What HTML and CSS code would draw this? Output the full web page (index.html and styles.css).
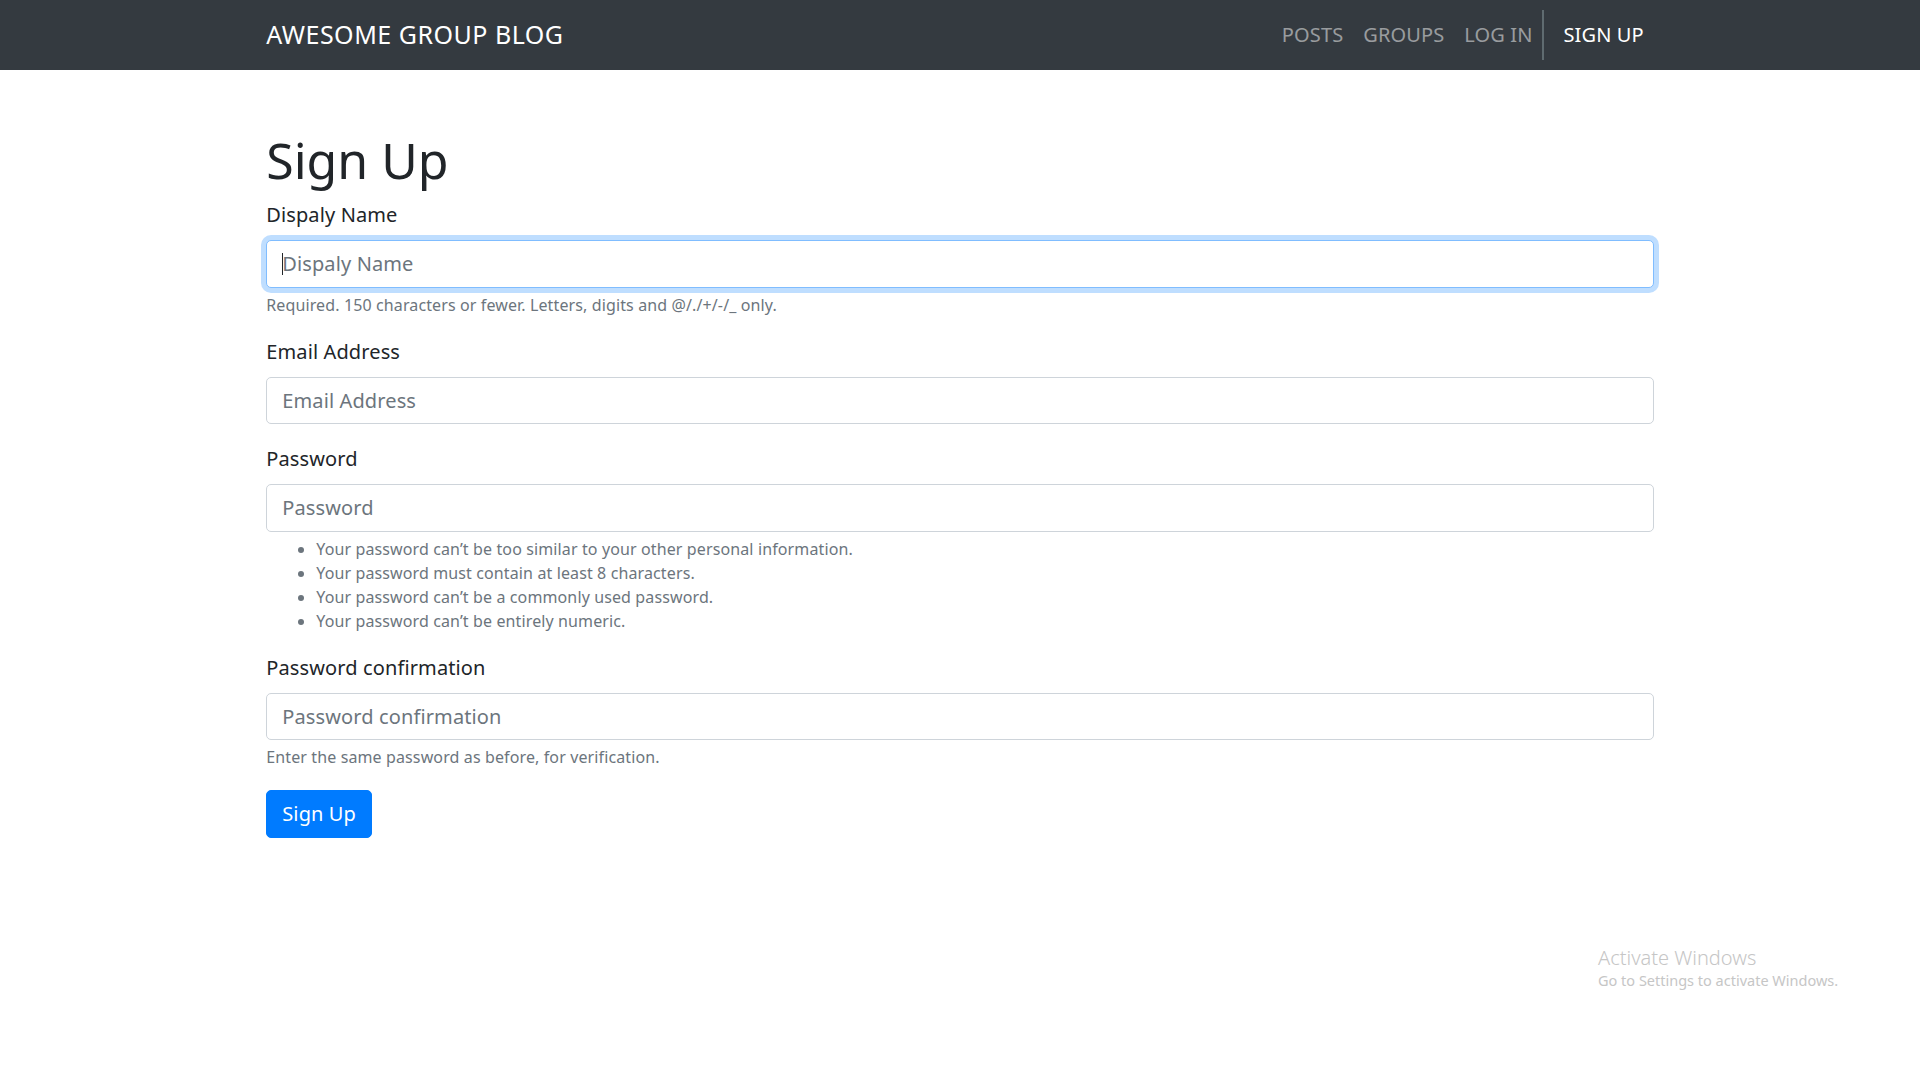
FILE: index.html
```html
<!DOCTYPE html>
<html lang="en">
<head>
<meta charset="utf-8">
<title>Sign Up</title>
<link rel="stylesheet" href="styles.css">
</head>
<body>
<nav class="navbar">
  <div class="nav-container">
    <a class="brand" href="#">AWESOME GROUP BLOG</a>
    <ul class="nav-links">
      <li><a class="nav-link" href="#">POSTS</a></li>
      <li><a class="nav-link" href="#">GROUPS</a></li>
      <li><a class="nav-link" href="#">LOG IN</a></li>
      <li class="nav-sep"><a class="nav-link active" href="#">SIGN UP</a></li>
    </ul>
  </div>
</nav>
<main class="container">
  <h1 class="title">Sign Up</h1>
  <form class="form">
    <div class="form-group">
      <label class="label">Dispaly Name</label>
      <div class="input-wrap">
        <input class="input focused" type="text" placeholder="Dispaly Name">
        <span class="caret"></span>
      </div>
      <small class="help">Required. 150 characters or fewer. Letters, digits and @/./+/-/_ only.</small>
    </div>
    <div class="form-group">
      <label class="label">Email Address</label>
      <input class="input" type="email" placeholder="Email Address">
    </div>
    <div class="form-group">
      <label class="label">Password</label>
      <input class="input" type="password" placeholder="Password">
      <div class="help">
        <ul class="help-list">
          <li>Your password can’t be too similar to your other personal information.</li>
          <li>Your password must contain at least 8 characters.</li>
          <li>Your password can’t be a commonly used password.</li>
          <li>Your password can’t be entirely numeric.</li>
        </ul>
      </div>
    </div>
    <div class="form-group">
      <label class="label">Password confirmation</label>
      <input class="input" type="password" placeholder="Password confirmation">
      <small class="help">Enter the same password as before, for verification.</small>
    </div>
    <button class="btn" type="button">Sign Up</button>
  </form>
</main>
<div class="watermark">
  <div class="wm-title">Activate Windows</div>
  <div class="wm-sub">Go to Settings to activate Windows.</div>
</div>
</body>
</html>
```
FILE: styles.css
```css
* { box-sizing: border-box; }
html, body { margin: 0; padding: 0; }
body {
  font-family: "Segoe UI", "Noto Sans", "Liberation Sans", sans-serif;
  font-size: 20px;
  line-height: 1.5;
  letter-spacing: 0.006em;
  color: #212529;
  background: #fff;
  width: 1920px;
  height: 1080px;
  position: relative;
  overflow: hidden;
}
.navbar {
  background: #343a40;
  height: 70px;
  padding: 10px 0;
}
.nav-container {
  width: 1425px;
  margin: 0 auto;
  padding: 0 18.75px;
  display: flex;
  align-items: center;
  justify-content: space-between;
  height: 50px;
}
.brand {
  color: #fff;
  text-decoration: none;
  font-size: 25px;
  line-height: 37.5px;
  padding: 6.25px 0;
  letter-spacing: 0.02em;
}
.nav-links {
  list-style: none;
  margin: 0;
  padding: 0;
  display: flex;
  height: 50px;
}
.nav-links li { display: flex; }
.nav-link {
  display: block;
  padding: 10px 10px;
  line-height: 30px;
  color: rgba(255, 255, 255, 0.5);
  text-decoration: none;
}
.nav-link.active { color: #fff; }
.nav-sep {
  border-left: 2px solid #5f6b70;
  padding-left: 9px;
}
.container {
  width: 1425px;
  margin: 0 auto;
  padding: 60px 18.75px 0;
}
.title {
  font-size: 50px;
  font-weight: 400;
  line-height: 60px;
  margin: 0 0 10px;
  letter-spacing: 0;
}
.form-group { margin-bottom: 20px; }
.label {
  display: block;
  margin-bottom: 10px;
  line-height: 30px;
}
.input-wrap { position: relative; }
.input {
  display: block;
  width: 100%;
  height: 47.5px;
  padding: 7.5px 15px;
  font-family: inherit;
  font-size: 20px;
  line-height: 30px;
  letter-spacing: 0.006em;
  color: #495057;
  background: #fff;
  border: 1.25px solid #ced4da;
  border-radius: 5px;
  outline: none;
}
.input::placeholder { color: #6c757d; opacity: 1; }
.input.focused {
  border-color: #80bdff;
  box-shadow: 0 0 0 5px rgba(0, 123, 255, 0.25);
}
.caret {
  position: absolute;
  left: 16px;
  top: 13px;
  width: 1px;
  height: 22px;
  background: #212529;
}
.help {
  display: block;
  margin-top: 5px;
  font-size: 16px;
  line-height: 24px;
  color: #6c757d;
}
.help-list {
  margin: 0;
  padding-left: 50px;
}
.btn {
  display: inline-block;
  font-family: inherit;
  font-size: 20px;
  line-height: 30px;
  letter-spacing: 0.006em;
  padding: 7.5px 15px;
  height: 47.5px;
  color: #fff;
  background: #007bff;
  border: 1.25px solid #007bff;
  border-radius: 5px;
  margin-top: 1px;
}
.watermark {
  position: absolute;
  left: 1598px;
  top: 945px;
  color: #c6c6c6;
  line-height: 1.3;
  letter-spacing: 0;
}
.wm-title { font-size: 20px; font-weight: 300; }
.wm-sub { font-size: 14.5px; }
```
